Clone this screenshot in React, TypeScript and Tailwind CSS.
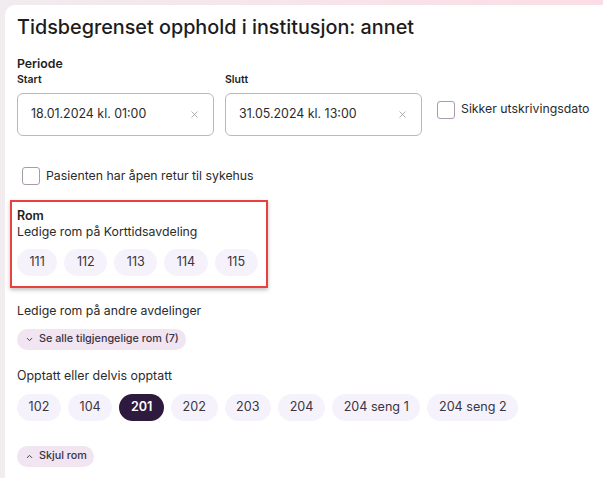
import { X, ChevronDown, ChevronUp } from 'lucide-react';

const localRooms = ['111', '112', '113', '114', '115'];
const busyRooms = ['102', '104', '201', '202', '203', '204', '204 seng 1', '204 seng 2'];

function RoomChip({ label, selected, wide }: { label: string; selected?: boolean; wide?: boolean }) {
  const pad = wide ? 'px-[12.5px]' : 'px-[11.6px]';
  return (
    <button
      className={
        selected
          ? `h-[27px] ${pad} rounded-full bg-[#2e1a3e] text-white text-[12.6px] font-semibold`
          : `h-[27px] ${pad} rounded-full bg-[#f5f2fb] text-[#3a3540] text-[12.6px]`
      }
    >
      {label}
    </button>
  );
}

function DateField({ value }: { value: string }) {
  return (
    <div className="w-[197px] h-[43px] rounded-[6px] border border-[#bfb3c4] flex items-center justify-between pl-[13px] pr-[13px]">
      <span className="text-[12.4px] text-[#2b2b2b]">{value}</span>
      <X size={11} strokeWidth={1.4} className="text-[#8a8590]" />
    </div>
  );
}

function Checkbox({ label, className }: { label: string; className?: string }) {
  return (
    <label className={'flex items-center gap-[6px] ' + (className ?? '')}>
      <span className="w-[18px] h-[18px] rounded-[3px] border border-[#a79cab] bg-white shrink-0" />
      <span className="text-[12.3px] leading-[16px] text-[#2b2b2b]">{label}</span>
    </label>
  );
}

export default function App() {
  return (
    <div
      className="h-[478px] overflow-hidden bg-gradient-to-r from-[#f1ecef] to-[#fbdde5] pt-[5px] pl-[5px]"
      style={{ fontFamily: 'Inter, "Noto Sans", sans-serif' }}
    >
      <div className="h-full bg-white rounded-tl-[10px] pt-[8px] px-[12px]">
        <h1 className="text-[19.8px] leading-[28px] font-medium text-[#1c1c1c]">
          Tidsbegrenset opphold i institusjon: annet
        </h1>

        {/* Periode */}
        <div className="mt-[15px] text-[12.3px] leading-[16px] font-semibold text-[#1f1f1f]">Periode</div>
        <div className="flex items-start gap-[11px]">
          <div>
            <div className="text-[10.5px] leading-[16px] font-semibold text-[#1f1f1f]">Start</div>
            <div className="mt-[5px]">
              <DateField value="18.01.2024 kl. 01:00" />
            </div>
          </div>
          <div>
            <div className="text-[10.5px] leading-[16px] font-semibold text-[#1f1f1f]">Slutt</div>
            <div className="mt-[5px]">
              <DateField value="31.05.2024 kl. 13:00" />
            </div>
          </div>
          <Checkbox label="Sikker utskrivingsdato" className="mt-[29px] ml-[4px] !items-start" />
        </div>

        <Checkbox label="Pasienten har åpen retur til sykehus" className="mt-[31px] ml-[5px]" />

        {/* Rom */}
        <div className="mt-[15px] -ml-[7px] w-[258px] border-2 border-[#e8403c] pt-[6px] pb-[10px] px-[5px] shadow-[0_2px_4px_rgba(0,0,0,0.25)]">
          <div className="text-[12.5px] leading-[16px] font-semibold text-[#1f1f1f]">Rom</div>
          <div className="text-[12.3px] leading-[16px] text-[#2b2b2b]">Ledige rom på Korttidsavdeling</div>
          <div className="mt-[9px] flex gap-[7px]">
            {localRooms.map((r) => (
              <RoomChip key={r} label={r} wide />
            ))}
          </div>
        </div>

        <div className="mt-[14px] text-[12.3px] leading-[18px] text-[#2b2b2b]">Ledige rom på andre avdelinger</div>
        <button className="mt-[9px] h-[21px] pl-[8px] pr-[7px] rounded-full bg-[#f0e5f0] flex items-center gap-[5px] text-[10.8px] font-medium text-[#3a3445]">
          <ChevronDown size={9} strokeWidth={2.5} />
          Se alle tilgjengelige rom (7)
        </button>

        <div className="mt-[17px] text-[12.4px] leading-[18px] text-[#2b2b2b]">Opptatt eller delvis opptatt</div>
        <div className="mt-[9px] flex gap-[7px]">
          {busyRooms.map((r) => (
            <RoomChip key={r} label={r} selected={r === '201'} />
          ))}
        </div>

        <button className="mt-[25px] h-[21px] pl-[8px] pr-[7px] rounded-full bg-[#f0e5f0] flex items-center gap-[5px] text-[10.8px] font-medium text-[#3a3445]">
          <ChevronUp size={9} strokeWidth={2.5} />
          Skjul rom
        </button>
      </div>
    </div>
  );
}
